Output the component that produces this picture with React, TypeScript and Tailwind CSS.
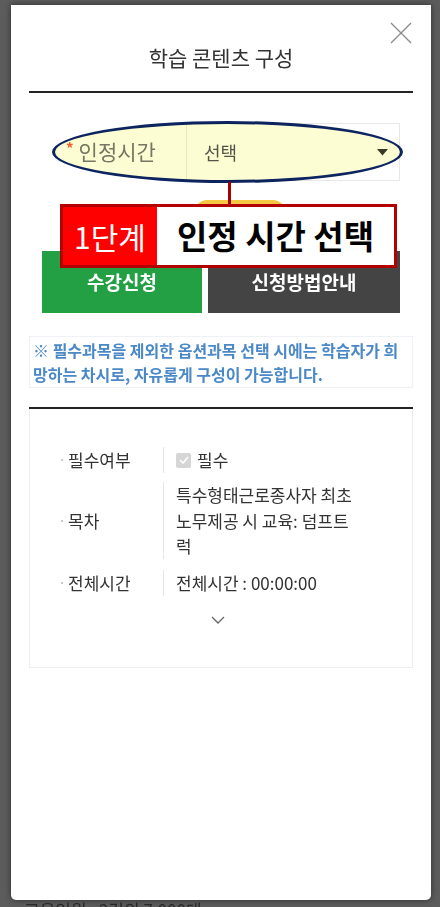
import React from 'react';

const font = { fontFamily: '"Noto Sans CJK KR", "Noto Sans", sans-serif' };

function DetailRow({ label, children, h }: { label: string; children: React.ReactNode; h: string }) {
  return (
    <div className={`flex items-center ${h}`}>
      <div className="flex w-[133px] items-center pl-[31px]">
        <span className="mr-[5px] h-[2px] w-[2px] rounded-full bg-[#bbb]" />
        <span className="text-[17px] text-[#333]">{label}</span>
      </div>
      <div className="flex h-full items-center border-l border-[#e6e6e6] pl-[12px]">{children}</div>
    </div>
  );
}

export default function App() {
  return (
    <div className="relative h-[907px] w-[440px] overflow-hidden bg-[#5c5c5c]" style={font}>
      {/* page behind the overlay */}
      <div className="absolute left-[24px] top-[897px] text-[17px] text-[#2a2a2a]">교육인원 : 2건의 7,000대</div>

      <div className="relative ml-[11px] mt-[5px] h-[895px] w-[420px] rounded-b-[5px] bg-white px-[18px] shadow-[0_0_6px_rgba(0,0,0,0.5)]">
        {/* close */}
        <button className="absolute right-[19px] top-[17px] h-[22px] w-[22px]">
          <svg viewBox="0 0 22 22" className="h-full w-full" fill="none" stroke="#8a8a8a" strokeWidth="1.3">
            <path d="M1 1 L21 21 M21 1 L1 21" />
          </svg>
        </button>

        <h2 className="pt-[38px] text-center text-[21px] leading-[28px] text-[#333]">학습 콘텐츠 구성</h2>
        <div className="mt-[20px] h-[2px] bg-[#222]" />

        <div className="mx-[13px]">
          {/* select row */}
          <div className="mt-[30px] flex h-[58px]">
            <div className="flex w-[144px] items-center pl-[24px] text-[21px] text-[#777]">
              <span className="mr-[5px] -translate-y-[4px] text-[15px] font-bold text-[#f4603a]">*</span>
              인정시간
            </div>
            <div className="flex flex-1 items-center justify-between border border-[#e8e8e8] pl-[17px] pr-[11px]">
              <span className="text-[18px] text-[#555]">선택</span>
              <svg width="11" height="7" viewBox="0 0 11 7"><path d="M0 0 H11 L5.5 6.5 Z" fill="#3a3a2a" /></svg>
            </div>
          </div>

          <div className="ml-[153px] mt-[19px] h-[40px] w-[90px] rounded-[12px] bg-[#f6c744]" />

          <div className="mt-[11px] flex h-[62px] gap-[6px]">
            <button className="flex w-[160px] items-center justify-center bg-[#23a043] text-[19px] font-bold text-white">수강신청</button>
            <button className="flex flex-1 items-center justify-center bg-[#444] text-[19px] font-bold text-white">신청방법안내</button>
          </div>
        </div>

        <div className="mt-[23px] border border-[#eef2f6] px-[3px] py-[1px] text-[16px] font-bold leading-[24px] text-[#4a88c7]">
          ※ 필수과목을 제외한 옵션과목 선택 시에는 학습자가 희망하는 차시로, 자유롭게 구성이 가능합니다.
        </div>

        <div className="mt-[19px] h-[2px] bg-[#222]" />

        <div className="h-[259px] border border-t-0 border-[#eee] pt-[38px]">
          <DetailRow label="필수여부" h="h-[26px]">
            <span className="mr-[6px] flex h-[15px] w-[15px] items-center justify-center rounded-[2px] bg-[#d6d6d6]">
              <svg width="10" height="8" viewBox="0 0 10 8" fill="none" stroke="white" strokeWidth="1.6">
                <path d="M1 4 L4 7 L9 1" />
              </svg>
            </span>
            <span className="text-[17px] text-[#333]">필수</span>
          </DetailRow>
          <div className="mt-[9px]">
            <DetailRow label="목차" h="h-[77px]">
              <span className="w-[184px] text-[17px] leading-[25.5px] text-[#333]">
                특수형태근로종사자 최초 노무제공 시 교육: 덤프트럭
              </span>
            </DetailRow>
          </div>
          <div className="mt-[11px]">
            <DetailRow label="전체시간" h="h-[26px]">
              <span className="text-[17px] text-[#333]">전체시간 : 00:00:00</span>
            </DetailRow>
          </div>
          <div className="mt-[20px] flex justify-center pr-[6px]">
            <svg width="14" height="8" viewBox="0 0 14 8" fill="none" stroke="#666" strokeWidth="1.3">
              <path d="M1 1 L7 7 L13 1" />
            </svg>
          </div>
        </div>

        {/* annotation overlay */}
        <div className="absolute left-[41px] top-[116px] h-[62px] w-[351px] rounded-[50%] border-[3px] border-[#0c2460] bg-[#fdfdd4] mix-blend-multiply" />
        <div className="absolute left-[217px] top-[177px] h-[23px] w-[3px] bg-[#a80000]" />
        <div className="absolute left-[49px] top-[199px] flex h-[64px] w-[337px] border-[3px] border-[#b30000] bg-white">
          <div className="flex w-[94px] items-center justify-center bg-[#ff0000] text-[30px] text-white">1단계</div>
          <div className="flex flex-1 items-center justify-center text-[33px] font-bold text-black">인정 시간 선택</div>
        </div>
      </div>
    </div>
  );
}
